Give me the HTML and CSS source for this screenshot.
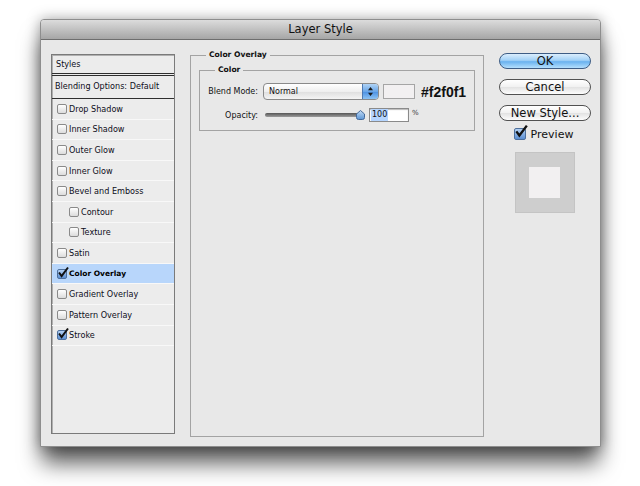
FILE: index.html
```html
<!DOCTYPE html>
<html lang="en">

<head>
    <meta charset="UTF-8">
    <title>Layer Style</title>
    <link rel="stylesheet" href="styles.css">
</head>

<body>
    <div class="window">
        <div class="titlebar">Layer Style</div>
        <div class="content">
            <div class="styles-list">
                <div class="list-head">Styles</div>
                <div class="list-blend">Blending Options: Default</div>
                <div class="row"><span class="cb"></span>Drop Shadow</div>
                <div class="row"><span class="cb"></span>Inner Shadow</div>
                <div class="row"><span class="cb"></span>Outer Glow</div>
                <div class="row"><span class="cb"></span>Inner Glow</div>
                <div class="row"><span class="cb"></span>Bevel and Emboss</div>
                <div class="row sub"><span class="cb"></span>Contour</div>
                <div class="row sub"><span class="cb"></span>Texture</div>
                <div class="row"><span class="cb"></span>Satin</div>
                <div class="row selected"><span class="cb on"><svg viewBox="0 0 12 12"><path d="M2 5.5 L4.6 9 L11 0.5" /></svg></span>Color Overlay</div>
                <div class="row"><span class="cb"></span>Gradient Overlay</div>
                <div class="row"><span class="cb"></span>Pattern Overlay</div>
                <div class="row"><span class="cb on"><svg viewBox="0 0 12 12"><path d="M2 5.5 L4.6 9 L11 0.5" /></svg></span>Stroke</div>
            </div>

            <fieldset class="group">
                <legend>Color Overlay</legend>
                <fieldset class="group inner">
                    <legend>Color</legend>
                    <div class="field">
                        <label>Blend Mode:</label>
                        <div class="select">
                            <span class="value">Normal</span>
                            <span class="select-arrows">
                                <svg width="7" height="11" viewBox="0 0 7 11"><path d="M3.5 1 L6 4.3 H1 Z M3.5 10 L6 6.7 H1 Z" /></svg>
                            </span>
                        </div>
                        <div class="swatch"></div>
                        <div class="hex">#f2f0f1</div>
                    </div>
                    <div class="field">
                        <label>Opacity:</label>
                        <div class="slider">
                            <div class="track"></div>
                            <svg class="knob" width="9" height="10" viewBox="0 0 9 10">
                                <defs>
                                    <linearGradient id="kg" x1="0" y1="0" x2="0" y2="1">
                                        <stop offset="0" stop-color="#c3dcf6" />
                                        <stop offset="1" stop-color="#5b95d6" />
                                    </linearGradient>
                                </defs>
                                <path d="M4.5 0.5 L8.5 4 V7.5 Q8.5 9.5 6.5 9.5 H2.5 Q0.5 9.5 0.5 7.5 V4 Z" fill="url(#kg)" stroke="#45699a" />
                            </svg>
                        </div>
                        <div class="num"><span class="sel">100</span></div>
                        <span class="pct">%</span>
                    </div>
                </fieldset>
            </fieldset>

            <div class="buttons">
                <div class="btn default">OK</div>
                <div class="btn">Cancel</div>
                <div class="btn">New Style...</div>
                <div class="preview-check"><span class="cb big on"><svg viewBox="0 0 12 12"><path d="M2 5.5 L4.6 9 L11 0.5" /></svg></span>Preview</div>
                <div class="preview">
                    <div class="preview-inner"></div>
                </div>
            </div>
        </div>
    </div>
</body>

</html>
```

FILE: styles.css
```css
* {
    margin: 0;
    padding: 0;
    box-sizing: border-box;
}

html,
body {
    height: 100%;
    background-color: #fff;
}

body {
    padding-top: 19px;
    font-family: "DejaVu Sans", sans-serif;
    color: #111;
}

.window {
    position: relative;
    width: 561px;
    height: 428px;
    margin-left: 40px;
    background-color: #e8e8e8;
    border: 1px solid #8e8e8e;
    border-radius: 4px 4px 0 0;
    box-shadow: 0 18px 22px -2px rgba(0, 0, 0, .65), 0 0 14px rgba(0, 0, 0, .35);
    display: flex;
    flex-direction: column;
}

.titlebar {
    height: 20px;
    border-bottom: 1px solid #6e6e6e;
    border-radius: 3px 3px 0 0;
    background: linear-gradient(#dcdcdc, #a6a6a6);
    text-align: center;
    font-size: 11.5px;
    line-height: 19px;
    color: #111;
}

.content {
    flex: 1;
    display: flex;
    align-items: flex-start;
    padding: 14px 0 0 10px;
}

/* styles list */
.styles-list {
    width: 124px;
    height: 380px;
    flex: none;
    border: 1px solid #7a7a7a;
    background-color: #ececec;
    box-shadow: inset 1px 1px 0 #b0b0b0;
    font-size: 8.1px;
    color: #0d0d1a;
}

.list-head {
    height: 21px;
    line-height: 18px;
    padding-left: 4px;
    border-bottom: 3px double #2e2e2e;
}

.list-blend {
    height: 23px;
    line-height: 21px;
    padding-left: 3px;
    border-bottom: 1px solid #2e2e2e;
}

.row {
    height: 20.6px;
    display: flex;
    align-items: center;
    gap: 2px;
    padding-left: 5px;
    border-bottom: 1px solid #f8f8f8;
}

.row.sub {
    padding-left: 17px;
}

.row.selected {
    background-color: #b8d6fb;
    font-weight: bold;
    font-size: 7.5px;
    color: #000;
}

.cb {
    position: relative;
    flex: none;
    width: 10px;
    height: 10px;
    border: 1px solid #8a8a8a;
    border-radius: 2px;
    background: linear-gradient(#fff, #dcdcdc);
}

.cb.on {
    border-color: #4d6f9c;
    background: linear-gradient(#b3d0f2, #5c8fd3);
}

.cb svg {
    position: absolute;
    left: -1px;
    top: -3px;
    width: 12px;
    height: 12px;
    overflow: visible;
}

.cb svg path {
    fill: none;
    stroke: #111;
    stroke-width: 2;
}

.cb.big {
    width: 12px;
    height: 12px;
}

.cb.big svg {
    width: 14px;
    height: 14px;
    top: -4px;
}

/* group boxes */
.group {
    width: 294px;
    height: 387px;
    flex: none;
    margin: -4px 0 0 15px;
    border: 1px solid #a3a3a3;
    padding: 5px 8px 0 8px;
}

.group legend {
    margin-left: 7px;
    padding: 0 3px;
    font-size: 7.6px;
    font-weight: bold;
    line-height: 10px;
}

.group.inner {
    width: auto;
    height: auto;
    margin: 0;
    padding: 8px 0 8px 0;
}

.group.inner legend {
    margin-left: 15px;
}

.field {
    display: flex;
    align-items: center;
    font-size: 8px;
}

.field + .field {
    margin-top: 8px;
}

.field label {
    width: 58px;
    text-align: right;
}

.select {
    width: 116px;
    height: 17px;
    margin-left: 5px;
    border: 1px solid #8a8a8a;
    border-radius: 4px;
    background: linear-gradient(#fff, #efefef 50%, #dedede 51%, #f4f4f4);
    display: flex;
    align-items: center;
    overflow: hidden;
}

.select .value {
    flex: 1;
    padding-left: 5px;
}

.select-arrows {
    width: 16px;
    height: 100%;
    border-left: 1px solid #4d79b2;
    background: linear-gradient(#b0d3f5, #6aa6e8 50%, #4a8fe2 51%, #8cc2f3);
    display: flex;
    align-items: center;
    justify-content: center;
}

.select-arrows path {
    fill: #1a1a1a;
}

.swatch {
    width: 32px;
    height: 15px;
    margin-left: 4px;
    background-color: #f2f0f1;
    border: 1px solid #a5a5a5;
}

.hex {
    margin-left: 6px;
    font: bold 14px "Liberation Sans", Arial, sans-serif;
    color: #111;
}

.slider {
    position: relative;
    width: 100px;
    height: 14px;
    margin-left: 7px;
    display: flex;
    align-items: center;
}

.track {
    width: 95px;
    height: 4px;
    border-radius: 2px;
    background: linear-gradient(#555, #9c9c9c);
}

.knob {
    position: absolute;
    left: 91px;
    top: 2px;
}

.num {
    width: 40px;
    height: 14px;
    margin-left: 4px;
    border: 1px solid #8a8a8a;
    background-color: #fff;
    box-shadow: inset 0 1px 1px #bbb;
    padding-left: 1px;
    display: flex;
    align-items: center;
}

.num .sel {
    height: 12px;
    line-height: 12px;
    padding: 0 1px;
    background-color: #b5d5ff;
}

.pct {
    margin: -4px 0 0 3px;
    font-size: 7px;
    color: #333;
}

/* buttons */
.buttons {
    width: 92px;
    flex: none;
    margin: -1px 0 0 15px;
    display: flex;
    flex-direction: column;
    align-items: center;
}

.btn {
    width: 92px;
    height: 16px;
    margin-bottom: 10px;
    border: 1px solid #515151;
    border-radius: 8px;
    background: linear-gradient(#fff, #f1f1f1 50%, #e2e2e2 51%, #fdfdfd);
    font-size: 11.5px;
    line-height: 14px;
    text-align: center;
    color: #111;
}

.btn.default {
    border-color: #3e5d85;
    background: linear-gradient(#dbeefd, #a2d1f7 45%, #6ab2ef 55%, #b4dffd);
}

.preview-check {
    height: 12px;
    margin: -3px 3px 0 0;
    display: flex;
    align-items: center;
    gap: 5px;
    font-size: 11px;
}

.preview {
    width: 60px;
    height: 61px;
    margin: 12px 1px 0 0;
    background-color: #cecece;
    border: 1px solid #c4c4c4;
    display: flex;
    align-items: center;
    justify-content: center;
}

.preview-inner {
    width: 31px;
    height: 31px;
    background-color: #f2f0f1;
}
```
